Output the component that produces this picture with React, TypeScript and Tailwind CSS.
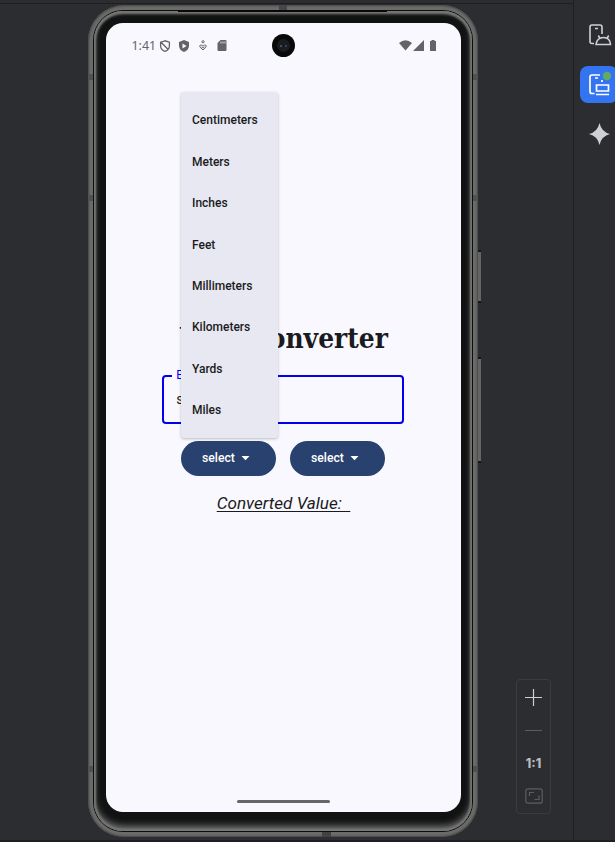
import React from "react";

const units = ["Centimeters", "Meters", "Inches", "Feet", "Millimeters", "Kilometers", "Yards", "Miles"];

function StatusBar() {
  return (
    <div className="relative flex h-[45px] items-center justify-between pr-[23px] pl-[26px] text-[#646467]">
      <div className="flex items-center">
        <span className="w-[27px] pt-[1px] font-['Noto_Sans'] text-[12.4px] leading-none whitespace-nowrap">1:41</span>
        <svg className="h-3 w-3" viewBox="0 0 12 12" fill="none" stroke="currentColor" strokeWidth="1.3">
          <path d="M6 .8 1.6 2.2v3.5C1.6 8.2 3.5 10.4 6 11.3c2.5-.9 4.4-3.1 4.4-5.6V2.2zM2 2.2l7 7" />
        </svg>
        <svg className="ml-[7px] h-3 w-3" viewBox="0 0 12 12" fill="currentColor" fillRule="evenodd">
          <path d="M6 0 1 2v3.7c0 3 2.2 5.3 5 6.3 2.8-1 5-3.3 5-6.3V2zM4.5 3.4 8.5 6 4.5 8.6z" />
        </svg>
        <svg className="ml-[8px] h-[11px] w-[10px]" viewBox="0 0 10 11" fill="none" stroke="currentColor">
          <circle cx="5" cy="1.8" r="1.1" />
          <path d="M5 10 2.1 7.200Q1.200 5.800 2.400 5.100 3.800 4.600 5 6.200 6.200 4.600 7.600 5.100 8.800 5.800 7.900 7.200zM3.500 7 5 8 6.500 7" />
        </svg>
        <svg className="ml-[9px] h-[11px] w-[10px]" viewBox="0 0 10 11" fill="currentColor">
          <path d="M3.500 0H8.500Q9.500 0 9.500 1V10Q9.500 11 8.500 11H1.500Q.5 11 .5 10V3z" />
          <path d="M4 1.500v2M6 1.500v2M8 1.500v2" stroke="#f9f8ff" strokeWidth=".8" />
        </svg>
      </div>
      <div className="flex items-center">
        <svg className="h-[11px] w-[13px]" viewBox="0 0 13 11" fill="currentColor"><path d="M0 3Q6.500-2.500 13 3L6.500 10.500z" /></svg>
        <svg className="ml-[1px] h-[11px] w-[11px]" viewBox="0 0 11 11" fill="currentColor"><path d="M0 11 11 0V11z" /></svg>
        <svg className="mr-[2px] ml-[6px] h-[11px] w-[6px]" viewBox="0 0 6 11" fill="currentColor"><path d="M1.500 0h3v1H6v10H0V1h1.500z" /></svg>
      </div>
      <div className="absolute top-[11px] left-[166px] flex h-[23px] w-[23px] items-center justify-center rounded-full bg-[#080909]">
        <div className="flex h-[13px] w-[13px] items-center justify-center gap-[3px] rounded-full bg-[#1b1c1f]">
          <i className="h-[2px] w-[2px] rounded-full bg-[#3f6769]" />
          <i className="h-[2px] w-[2px] rounded-full bg-[#354e83]" />
        </div>
      </div>
    </div>
  );
}

function SelectButton() {
  return (
    <button className="flex h-[35px] w-[95px] items-center rounded-full bg-[#29416f] pl-[21px] font-[Roboto] text-[12.200px] font-medium text-white">
      <span className="w-[32px]">select</span>
      <svg className="ml-[7px] h-[5px] w-[9px]" viewBox="0 0 9 5" fill="currentColor"><path d="M.5 0h8L4.500 4.300z" /></svg>
    </button>
  );
}

function UnitMenu() {
  return (
    <div className="absolute top-[69px] left-[75.500px] flex h-[346px] w-[97px] flex-col rounded-[3px] bg-[#e8e8f2] py-[7px] pl-[11px] shadow-[0_1px_3px_rgba(0,0,0,0.25)]">
      {units.map((unit) => (
        <div key={unit} className="flex h-[41.450px] shrink-0 items-center pt-[1px] font-[Roboto] text-[12px] font-medium text-[#1a1b21]">{unit}</div>
      ))}
    </div>
  );
}

function Screen() {
  return (
    <div className="relative h-[789px] w-[355px] rounded-[17px] bg-[#f9f8ff] text-[#1a1b21]">
      <StatusBar />
      <div className="flex h-[732px] flex-col items-center pt-[253px]">
        <h1 className="ml-[1px] flex h-[36px] w-[209px] items-center justify-center font-['DejaVu_Serif_Condensed','DejaVu_Serif',serif] text-[27.800px] leading-none font-bold whitespace-nowrap">Unit Converter</h1>
        <div className="relative mt-[18px] ml-[0.5px] h-[49px] w-[242px] rounded-[4px] border-2 border-[#0000ee] font-[Roboto]">
          <span className="absolute -top-[10px] left-[8px] bg-[#f9f8ff] px-[4px] text-[12px] leading-[16px] text-[#0000ee]">Enter value</span>
          <span className="flex h-full items-center pl-[12px] text-[14px]">s</span>
        </div>
        <div className="mt-[17px] flex gap-[14px]">
          <SelectButton />
          <SelectButton />
        </div>
        <p className="mt-[15px] ml-[1px] font-[Roboto] text-[17.100px] leading-[24px] whitespace-pre italic underline decoration-1 underline-offset-[2px]">{"Converted Value:  "}</p>
      </div>
      <div className="mx-auto h-[3px] w-[93px] rounded-full bg-[#666668]" />
      <UnitMenu />
    </div>
  );
}

function SideButton({ long = false }: { long?: boolean }) {
  return <div className={`w-[3px] border-y-2 border-[#171819] bg-[#656663] ${long ? "h-[106px]" : "h-[53px]"}`} />;
}

function Phone() {
  return (
    <div className="relative ml-[88px] flex h-[832px] w-[393px] shrink-0 items-start">
      <div className="relative h-[832px] w-[390px] rounded-[36px] bg-[#6b6c6a] p-[5px] shadow-[inset_0_0_2px_1px_#444545]">
        <div className="h-full w-full rounded-[30px] border border-[#0d0e0e]">
          <div className="flex h-full w-full justify-center rounded-[29px] bg-[#111212] pt-[12px] shadow-[inset_0_0_2px_2px_#767675,inset_0_3px_3px_0px_#757573,inset_0_-5px_7px_0px_#777]">
            <Screen />
          </div>
        </div>
        <i className="absolute top-[5px] left-[90px] h-[2px] w-[209px] bg-[#080808]" />
        <i className="absolute top-0 left-[191px] h-[5px] w-[8px] bg-[#454645]" />
        <i className="absolute bottom-0 left-[234px] h-[5px] w-[9px] bg-[#414241]" />
        <i className="absolute top-[69px] left-0 h-[6px] w-[5px] bg-[#505150]" />
        <i className="absolute top-[69px] right-0 h-[6px] w-[5px] bg-[#505150]" />
        <i className="absolute top-[761px] left-0 h-[6px] w-[5px] bg-[#505150]" />
        <i className="absolute top-[761px] right-0 h-[6px] w-[5px] bg-[#505150]" />
        <i className="absolute top-[190px] left-0 h-[6px] w-[5px] bg-[#505150]" />
        <i className="absolute top-[190px] right-0 h-[6px] w-[5px] bg-[#505150]" />
      </div>
      <div className="flex flex-col pt-[245px]">
        <SideButton />
        <div className="h-[54px]" />
        <SideButton long />
      </div>
    </div>
  );
}

function ZoomControls() {
  return (
    <div className="mt-[679px] ml-[35px] flex h-[135px] w-[35px] flex-col items-center rounded-[4px] border border-[#3b3c3f] text-[#ced0d6]">
      <svg className="mt-[9px] h-[17px] w-[17px]" viewBox="0 0 17 17" stroke="currentColor" strokeWidth="1.200"><path d="M0 8.500H17M8.500 0V17" /></svg>
      <i className="mt-[24px] h-px w-[17px] shrink-0 bg-[#5b5d61]" />
      <b className="mt-[23px] font-[Inter] text-[12.500px] leading-[20px] font-extrabold text-[#b9bbbf]">1:1</b>
      <svg className="mt-[14px] h-[16px] w-[18px]" viewBox="0 0 18 16" fill="none" stroke="#5b5d61" strokeWidth="1.200"><rect x=".8" y=".8" width="16.400" height="14.400" rx="2" /><path d="M4.500 8V4.500H9M14 7.500V11.500H9.500" /></svg>
    </div>
  );
}

function ToolRail() {
  return (
    <aside className="ml-auto flex h-full w-[42px] flex-col border-l border-[#1e1f22] pl-[6px]">
      <svg className="mt-[23px] ml-[8px] h-[24px] w-[24px]" viewBox="0 0 24 24" fill="none" stroke="#ced0d6" strokeWidth="1.600">
        <path d="M6 20.500H4Q2 20.500 2 18.500V4Q2 2 4 2H12Q14 2 14 4V11M7 5.500H10" />
        <path d="M8 21.500Q9 14.500 15.500 14.500T22.500 21.500zM10.300 12.500l1.800 3M20.700 12.500 18.900 15.500" />
      </svg>
      <div className="mt-[19px] h-[37px] w-[38px] rounded-[8px] bg-[#3574f0]">
        <svg className="mt-[5px] ml-[8px] h-[26px] w-[26px]" viewBox="0 0 26 26" fill="none" stroke="white" strokeWidth="1.700">
          <path d="M6.500 22.500H4Q2 22.500 2 20.500V6Q2 4 4 4H12M7 7H10M14 9v2M8.500 14H20.500V20H8.500zM8 23.500H21" /><circle cx="19" cy="5" r="4.200" fill="#5fad65" stroke="none" />
        </svg>
      </div>
      <svg className="mt-[20px] ml-[9px] h-[22px] w-[21px]" viewBox="0 0 21 22" fill="#ced0d6"><path d="M10.500 0Q12.500 9 21 11 12.500 13 10.500 22 8.500 13 0 11 8.500 9 10.500 0z" /></svg>
    </aside>
  );
}

export default function App() {
  return (
    <main className="relative flex h-[842px] w-[615px] overflow-hidden bg-[#2b2d30]">
      <div className="absolute top-[3px] left-0 h-px w-[573px] bg-[#1e1f22]" />
      <div className="mt-[5px]"><Phone /></div>
      <ZoomControls />
      <ToolRail />
      <div className="absolute bottom-0 left-0 h-[2px] w-full bg-[#1e1f22]" />
    </main>
  );
}
